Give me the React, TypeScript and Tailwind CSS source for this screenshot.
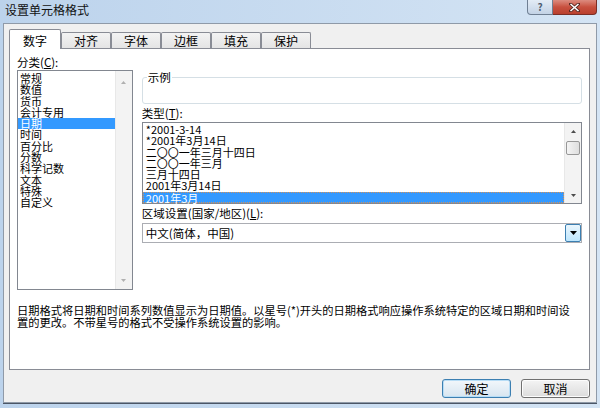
import React from "react";

const categories = ["常规", "数值", "货币", "会计专用", "日期", "时间", "百分比", "分数", "科学记数", "文本", "特殊", "自定义"];
const types = ["*2001-3-14", "*2001年3月14日", "二〇〇一年三月十四日", "二〇〇一年三月", "三月十四日", "2001年3月14日", "2001年3月"];
const tabs = ["对齐", "字体", "边框", "填充", "保护"];

// small scrollbar / combo arrow
function Arrow({ up, light }: { up?: boolean; light?: boolean }) {
  return (
    <svg width="5" height="3" viewBox="0 0 5 3">
      <polygon points={up ? "2.5,0 5,3 0,3" : "0,0 5,0 2.5,3"} fill={light ? "#b0b0b0" : "#4d4d4d"} />
    </svg>
  );
}

export default function App() {
  return (
    <div className="w-[600px] h-[408px] overflow-hidden bg-linear-to-r from-[#bcd3ec] to-[#d4e4f4] text-black font-['Noto_Sans_CJK_SC',sans-serif] text-[11.5px]">
      {/* title bar */}
      <div className="h-[23px] flex items-start">
        <div className="pl-[5px] leading-[20px] text-[12px] text-[#111]">设置单元格格式</div>
        <div className="ml-auto mr-[3px] flex">
          <div className="w-[26px] h-[15px] rounded-bl-[4px] border border-t-0 border-[#6f7f93] bg-linear-to-b from-[#e3ecf6] to-[#c3d3e6] flex items-center justify-center text-[10px] leading-none font-bold text-[#4f5f72]">?</div>
          <div className="w-[44px] h-[15px] rounded-br-[4px] border border-l-0 border-t-0 border-[#7a2e26] bg-linear-to-b from-[#dc8b7f] via-[#c8503f] to-[#b9402e] flex items-center justify-center">
            <svg width="11" height="9" viewBox="0 0 11 9">
              <path d="M1.5 1 L9.5 8 M9.5 1 L1.5 8" stroke="#5a2a24" strokeWidth="3.2" strokeLinecap="square" />
              <path d="M1.5 1 L9.5 8 M9.5 1 L1.5 8" stroke="#ffffff" strokeWidth="1.6" />
            </svg>
          </div>
        </div>
      </div>

      {/* dialog body */}
      <div className="mx-[3px] h-[380px] border border-[#8f9aa8] bg-[#f0f0f0] pt-[5px] pl-[5px]">
        {/* tab strip */}
        <div className="flex items-end h-[19px]">
          <div className="w-[52px] h-[20px] -mb-[1px] relative z-10 border border-b-0 border-[#898c95] rounded-t-[2px] bg-white flex items-center justify-center text-[12px] pt-[2px]">数字</div>
          {tabs.map((t) => (
            <div key={t} className="w-[50px] h-[16px] border border-b-0 border-[#898c95] rounded-t-[2px] bg-linear-to-b from-[#f3f3f3] to-[#e4e4e4] flex items-center justify-center text-[12px] pt-[1px]">
              {t}
            </div>
          ))}
        </div>

        {/* tab panel */}
        <div className="w-[581px] h-[322px] border border-[#898c95] bg-white pt-[6px] px-[7px]">
          <div className="flex">
            {/* category column */}
            <div className="w-[116px]">
              <div className="h-[15px] leading-[15px]">分类(<u>C</u>):</div>
              <div className="flex h-[220px] border border-[#828790] bg-white">
                <div className="flex-1 pt-[2px] text-[11px]">
                  {categories.map((c) => (
                    <div
                      key={c}
                      className={
                        c === "日期"
                          ? "h-[11.3px] leading-[11.3px] pl-[2px] bg-[#3399ff] text-white whitespace-nowrap"
                          : "h-[11.3px] leading-[11.3px] pl-[2px] whitespace-nowrap"
                      }
                    >
                      {c}
                    </div>
                  ))}
                </div>
                <div className="w-[17px] flex flex-col items-center justify-between bg-[#f3f3f3] border-l border-[#e8e8e8] pt-[10px] pb-[7px]">
                  <Arrow up light />
                  <Arrow light />
                </div>
              </div>
            </div>

            {/* right column */}
            <div className="ml-[9px] w-[441px]">
              <div className="mt-[22px] h-[27px] relative border border-[#d5dfe5] rounded-[3px]">
                <span className="absolute -top-[7px] left-[4px] bg-white px-[1px] leading-[12px]">示例</span>
              </div>
              <div className="h-[18px] leading-[18px]">类型(<u>T</u>):</div>
              <div className="flex h-[82px] border border-[#828790] bg-white">
                <div className="flex-1 pt-[1px] text-[11px]">
                  {types.map((t) => (
                    <div
                      key={t}
                      className={
                        t === "2001年3月"
                          ? "h-[11.3px] leading-[10px] pl-[2px] bg-[#3399ff] text-white border border-dotted border-[#d3925a] whitespace-nowrap"
                          : "h-[11.3px] leading-[11.3px] pl-[3px] whitespace-nowrap"
                      }
                    >
                      {t}
                    </div>
                  ))}
                </div>
                <div className="w-[17px] flex flex-col items-center bg-[#f3f3f3] border-l border-[#e8e8e8] pt-[7px] pb-[6px]">
                  <Arrow up />
                  <div className="mt-[8px] w-[14px] h-[14px] rounded-[2px] border border-[#979797] bg-linear-to-r from-[#f4f4f4] to-[#dedede]" />
                  <div className="mt-auto">
                    <Arrow />
                  </div>
                </div>
              </div>
              <div className="h-[19px] leading-[19px]">区域设置(国家/地区)(<u>L</u>):</div>
              <div className="flex h-[20px] border border-[#abadb3] bg-white">
                <div className="flex-1 pl-[3px] leading-[18px]">中文(简体，中国)</div>
                <div className="w-[16px] h-[18px] border border-[#3c7fb1] rounded-[2px] bg-linear-to-b from-[#eaf6fd] to-[#bee6fd] flex items-center justify-center">
                  <svg width="7" height="4" viewBox="0 0 7 4">
                    <polygon points="0,0 7,0 3.5,4" fill="#000" />
                  </svg>
                </div>
              </div>
            </div>
          </div>

          {/* description */}
          <div className="mt-[14px] leading-[12px] text-[11.25px] whitespace-nowrap">
            日期格式将日期和时间系列数值显示为日期值。以星号(*)开头的日期格式响应操作系统特定的区域日期和时间设
            <br />
            置的更改。不带星号的格式不受操作系统设置的影响。
          </div>
        </div>

        {/* buttons */}
        <div className="w-[581px] flex justify-end gap-[10px] mt-[9px]">
          <div className="w-[69px] h-[19px] rounded-[3px] border border-[#3c7fb1] bg-linear-to-b from-[#f2f7fb] to-[#d7e5f0] shadow-[inset_0_0_0_1px_#b7ddf6] flex items-center justify-center text-[12px]">确定</div>
          <div className="w-[69px] h-[19px] rounded-[3px] border border-[#707070] bg-linear-to-b from-[#f4f4f4] to-[#dcdcdc] shadow-[inset_0_0_0_1px_#fcfcfc] flex items-center justify-center text-[12px]">取消</div>
        </div>
      </div>
      <div className="mx-[3px] h-[1px] bg-[#4b5666]" />
    </div>
  );
}
